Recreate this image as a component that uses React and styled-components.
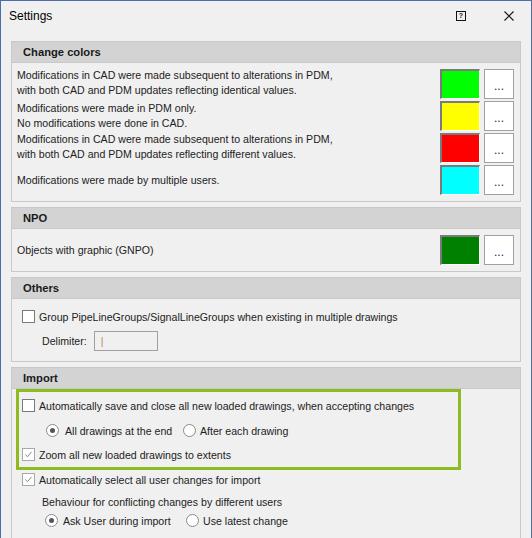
import React from "react";
import styled, { createGlobalStyle } from "styled-components";

const GlobalStyle = createGlobalStyle`
  body {
    margin: 0;
    background: #f0f0f0;
    font-family: "Liberation Sans", Arial, sans-serif;
  }
`;

const Window = styled.div`
  width: 532px;
  height: 538px;
  box-sizing: border-box;
  border: 1px solid #4d6fa8;
  border-bottom: none;
  background: #f0f0f0;
  overflow: hidden;
  color: #222;
  font-size: 10.6px;
`;

const TitleBar = styled.div`
  height: 30px;
  display: flex;
  align-items: center;
  padding: 0 0 0 8px;
`;

const Title = styled.div`
  flex: 1;
  font-size: 12px;
  color: #000;
`;

const HelpIcon = styled.span`
  width: 8px;
  height: 8px;
  border: 1px solid #111;
  font-size: 7px;
  font-weight: bold;
  line-height: 8px;
  text-align: center;
  margin-right: 38px;
  color: #111;
`;

const CloseButton = styled.div`
  width: 10px;
  height: 10px;
  margin-right: 17px;
  display: flex;
`;

const Content = styled.div`
  padding: 10px 10px 0 10px;
  display: flex;
  flex-direction: column;
  gap: 5px;
`;

const Section = styled.div`
  border: 1px solid #c8c8c8;
`;

const SectionHeader = styled.div`
  height: 20px;
  line-height: 20px;
  background: #d3d3d3;
  border-bottom: 1px solid #c8c8c8;
  padding-left: 11px;
  font-size: 11.2px;
  font-weight: bold;
  color: #1a1a1a;
`;

const Body = styled.div`
  padding: ${(p) => p.$pad || "6px 6px 6px 5px"};
  display: flex;
  flex-direction: column;
  gap: ${(p) => p.$gap || "2px"};
`;

const ColorRow = styled.div`
  display: flex;
  align-items: center;
  gap: 4px;
  height: 30px;
`;

const RowText = styled.div`
  flex: 1;
  line-height: 15px;
  margin-top: ${(p) => p.$shift || "0"};
`;

const Swatch = styled.div`
  width: 37px;
  height: 27px;
  margin-left: 1px;
  background: ${(p) => p.$color};
  border-top: 2px solid #7a7a7a;
  border-left: 2px solid #7a7a7a;
  border-right: 1px solid #fff;
  border-bottom: 1px solid #fff;
`;

const DotsButton = styled.div`
  width: 28px;
  height: 25px;
  padding-top: 3px;
  background: #fff;
  border: 1px solid #a0a0a0;
  display: flex;
  align-items: center;
  justify-content: center;
  font-size: 12px;
  color: #2a2350;
`;

const CheckRow = styled.div`
  display: flex;
  align-items: center;
  gap: 4px;
  height: 13px;
  margin: ${(p) => p.$margin || "0"};
`;

const Box = styled.span`
  width: 11px;
  height: 11px;
  background: #fff;
  border: 1px solid ${(p) => (p.$checked ? "#a8a8a8" : "#7a7a7a")};
  display: flex;
  align-items: center;
  justify-content: center;
`;

const RadioRow = styled.div`
  display: flex;
  align-items: center;
  height: 13px;
  margin: ${(p) => p.$margin};
`;

const RadioOption = styled.label`
  display: flex;
  align-items: center;
  gap: ${(p) => p.$gap || "5px"};
  width: ${(p) => p.$width || "auto"};
`;

const Circle = styled.span`
  width: 11px;
  height: 11px;
  border-radius: 50%;
  background: #fff;
  border: 1px solid #8a8a8a;
  display: flex;
  align-items: center;
  justify-content: center;
  &::after {
    content: "";
    width: 5px;
    height: 5px;
    border-radius: 50%;
    background: ${(p) => (p.$checked ? "#555" : "transparent")};
  }
`;

const DelimiterRow = styled.div`
  display: flex;
  align-items: center;
  margin: 8px 0 0 20px;
  gap: 7px;
`;

const DelimiterInput = styled.div`
  width: 64px;
  height: 20px;
  box-sizing: border-box;
  border: 1px solid #a0a0a0;
  background: #f0f0f0;
  color: #c08a50;
  line-height: 18px;
  padding-left: 6px;
`;

const Highlight = styled.div`
  width: 445px;
  box-sizing: border-box;
  border: 3px solid #8cbc22;
  margin: 0 0 0 -1px;
  padding: 7px 0 6px 3px;
`;

const Label = styled.div`
  line-height: 15px;
  margin: ${(p) => p.$margin};
`;

const Check = ({ checked }) => (
  <Box $checked={checked}>
    {checked && (
      <svg width="9" height="9" viewBox="0 0 9 9">
        <path d="M1.5 4.5 L3.5 6.8 L7.5 1.8" fill="none" stroke="#8a8a8a" strokeWidth="1" />
      </svg>
    )}
  </Box>
);

const colorRows = [
  { color: "#00ff00", lines: ["Modifications in CAD were made subsequent to alterations in PDM,", "with both CAD and PDM updates reflecting identical values."], shift: "-3px" },
  { color: "#ffff00", lines: ["Modifications were made in PDM only.", "No modifications were done in CAD."], shift: "0" },
  { color: "#ff0000", lines: ["Modifications in CAD were made subsequent to alterations in PDM,", "with both CAD and PDM updates reflecting different values."], shift: "-2px" },
  { color: "#00ffff", lines: ["Modifications were made by multiple users."], shift: "0" },
];

const App = () => {
  return (
    <>
      <GlobalStyle />
      <Window>
        <TitleBar>
          <Title>Settings</Title>
          <HelpIcon>?</HelpIcon>
          <CloseButton>
            <svg width="10" height="10" viewBox="0 0 10 10">
              <path d="M0.5 0.5 L9.5 9.5 M9.5 0.5 L0.5 9.5" stroke="#111" strokeWidth="1.1" />
            </svg>
          </CloseButton>
        </TitleBar>
        <Content>
          <Section>
            <SectionHeader>Change colors</SectionHeader>
            <Body>
              {colorRows.map((r) => (
                <ColorRow key={r.color}>
                  <RowText $shift={r.shift}>
                    {r.lines.map((l) => (
                      <div key={l}>{l}</div>
                    ))}
                  </RowText>
                  <Swatch $color={r.color} />
                  <DotsButton>...</DotsButton>
                </ColorRow>
              ))}
            </Body>
          </Section>

          <Section>
            <SectionHeader>NPO</SectionHeader>
            <Body>
              <ColorRow>
                <RowText>Objects with graphic (GNPO)</RowText>
                <Swatch $color="#008000" />
                <DotsButton>...</DotsButton>
              </ColorRow>
            </Body>
          </Section>

          <Section>
            <SectionHeader>Others</SectionHeader>
            <Body $pad="11px 6px 10px 10px" $gap="0">
              <CheckRow>
                <Check />
                <span>Group PipeLineGroups/SignalLineGroups when existing in multiple drawings</span>
              </CheckRow>
              <DelimiterRow>
                <span>Delimiter:</span>
                <DelimiterInput>|</DelimiterInput>
              </DelimiterRow>
            </Body>
          </Section>

          <Section>
            <SectionHeader>Import</SectionHeader>
            <Body $pad="0 6px 20px 5px" $gap="0">
              <Highlight>
                <CheckRow>
                  <Check />
                  <span>Automatically save and close all new loaded drawings, when accepting changes</span>
                </CheckRow>
                <RadioRow $margin="12px 0 0 24px">
                  <RadioOption $width="137px" $gap="6px">
                    <Circle $checked />
                    <span>All drawings at the end</span>
                  </RadioOption>
                  <RadioOption $gap="4px">
                    <Circle />
                    <span>After each drawing</span>
                  </RadioOption>
                </RadioRow>
                <CheckRow $margin="11px 0 0 0">
                  <Check checked />
                  <span>Zoom all new loaded drawings to extents</span>
                </CheckRow>
              </Highlight>
              <CheckRow $margin="3px 0 0 5px">
                <Check checked />
                <span>Automatically select all user changes for import</span>
              </CheckRow>
              <Label $margin="9px 0 0 25px">Behaviour for conflicting changes by different users</Label>
              <RadioRow $margin="4px 0 0 28px">
                <RadioOption $width="141px">
                  <Circle $checked />
                  <span>Ask User during import</span>
                </RadioOption>
                <RadioOption $gap="4px">
                  <Circle />
                  <span>Use latest change</span>
                </RadioOption>
              </RadioRow>
            </Body>
          </Section>
        </Content>
      </Window>
    </>
  );
};

export default App;
